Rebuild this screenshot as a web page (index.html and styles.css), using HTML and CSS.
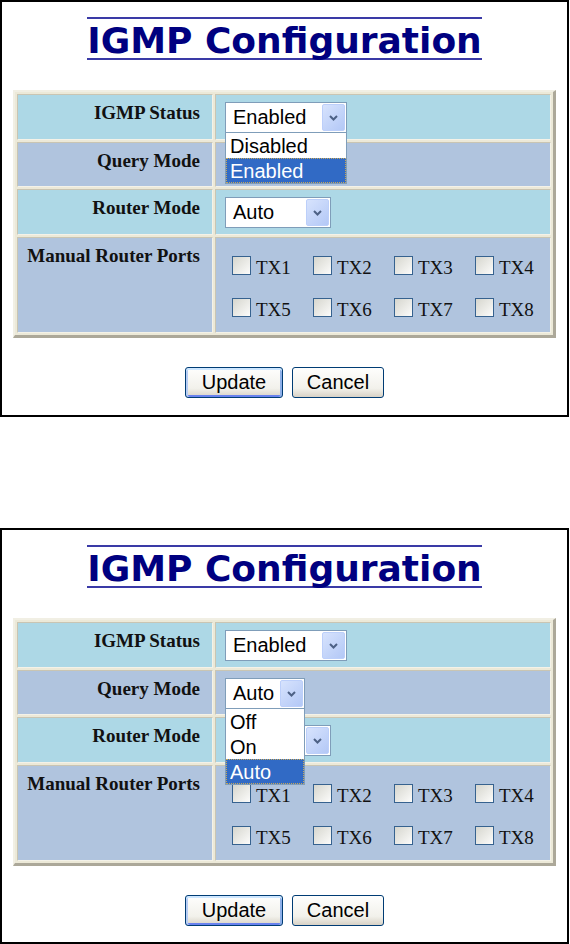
FILE: index.html
```html
<!DOCTYPE html>
<html lang="en">

<head>
    <meta charset="UTF-8">
    <meta name="viewport" content="width=device-width, initial-scale=1.0">
    <title>IGMP Configuration</title>
    <link rel="stylesheet" href="styles.css">
</head>

<body>

    <!-- Ekran 1: IGMP Status listesi acik -->
    <div class="shot">
        <h1 class="title"><span>IGMP Configuration</span></h1>

        <table class="config">
            <tr class="row-light row-short">
                <th>IGMP Status</th>
                <td>
                    <div class="select-wrap">
                        <div class="select select-status">
                            <span class="select-text">Enabled</span>
                            <span class="select-arrow"><svg width="9" height="6" viewBox="0 0 9 6"><polyline points="1,1 4.5,4.5 8,1" fill="none" stroke="#4d6185" stroke-width="2"/></svg></span>
                        </div>
                        <ul class="dropdown">
                            <li>Disabled</li>
                            <li class="active">Enabled</li>
                        </ul>
                    </div>
                </td>
            </tr>
            <tr class="row-dark row-mid">
                <th>Query Mode</th>
                <td>
                    <div class="select-wrap">
                        <div class="select select-query">
                            <span class="select-text">Auto</span>
                            <span class="select-arrow"><svg width="9" height="6" viewBox="0 0 9 6"><polyline points="1,1 4.5,4.5 8,1" fill="none" stroke="#4d6185" stroke-width="2"/></svg></span>
                        </div>
                    </div>
                </td>
            </tr>
            <tr class="row-light row-short">
                <th>Router Mode</th>
                <td>
                    <div class="select-wrap">
                        <div class="select select-router">
                            <span class="select-text">Auto</span>
                            <span class="select-arrow"><svg width="9" height="6" viewBox="0 0 9 6"><polyline points="1,1 4.5,4.5 8,1" fill="none" stroke="#4d6185" stroke-width="2"/></svg></span>
                        </div>
                    </div>
                </td>
            </tr>
            <tr class="row-dark row-tall">
                <th>Manual Router Ports</th>
                <td class="ports-cell">
                    <div class="ports">
                        <label class="port"><span class="checkbox"></span>TX1</label>
                        <label class="port"><span class="checkbox"></span>TX2</label>
                        <label class="port"><span class="checkbox"></span>TX3</label>
                        <label class="port"><span class="checkbox"></span>TX4</label>
                        <label class="port"><span class="checkbox"></span>TX5</label>
                        <label class="port"><span class="checkbox"></span>TX6</label>
                        <label class="port"><span class="checkbox"></span>TX7</label>
                        <label class="port"><span class="checkbox"></span>TX8</label>
                    </div>
                </td>
            </tr>
        </table>

        <div class="buttons">
            <button type="button" class="btn btn-update">Update</button>
            <button type="button" class="btn btn-cancel">Cancel</button>
        </div>
    </div>

    <!-- Ekran 2: Query Mode listesi acik -->
    <div class="shot shot-second">
        <h1 class="title"><span>IGMP Configuration</span></h1>

        <table class="config">
            <tr class="row-light row-short">
                <th>IGMP Status</th>
                <td>
                    <div class="select-wrap">
                        <div class="select select-status">
                            <span class="select-text">Enabled</span>
                            <span class="select-arrow"><svg width="9" height="6" viewBox="0 0 9 6"><polyline points="1,1 4.5,4.5 8,1" fill="none" stroke="#4d6185" stroke-width="2"/></svg></span>
                        </div>
                    </div>
                </td>
            </tr>
            <tr class="row-dark row-mid">
                <th>Query Mode</th>
                <td>
                    <div class="select-wrap">
                        <div class="select select-query">
                            <span class="select-text">Auto</span>
                            <span class="select-arrow"><svg width="9" height="6" viewBox="0 0 9 6"><polyline points="1,1 4.5,4.5 8,1" fill="none" stroke="#4d6185" stroke-width="2"/></svg></span>
                        </div>
                        <ul class="dropdown">
                            <li>Off</li>
                            <li>On</li>
                            <li class="active">Auto</li>
                        </ul>
                    </div>
                </td>
            </tr>
            <tr class="row-light row-short">
                <th>Router Mode</th>
                <td>
                    <div class="select-wrap">
                        <div class="select select-router">
                            <span class="select-text">Auto</span>
                            <span class="select-arrow"><svg width="9" height="6" viewBox="0 0 9 6"><polyline points="1,1 4.5,4.5 8,1" fill="none" stroke="#4d6185" stroke-width="2"/></svg></span>
                        </div>
                    </div>
                </td>
            </tr>
            <tr class="row-dark row-tall">
                <th>Manual Router Ports</th>
                <td class="ports-cell">
                    <div class="ports">
                        <label class="port"><span class="checkbox"></span>TX1</label>
                        <label class="port"><span class="checkbox"></span>TX2</label>
                        <label class="port"><span class="checkbox"></span>TX3</label>
                        <label class="port"><span class="checkbox"></span>TX4</label>
                        <label class="port"><span class="checkbox"></span>TX5</label>
                        <label class="port"><span class="checkbox"></span>TX6</label>
                        <label class="port"><span class="checkbox"></span>TX7</label>
                        <label class="port"><span class="checkbox"></span>TX8</label>
                    </div>
                </td>
            </tr>
        </table>

        <div class="buttons">
            <button type="button" class="btn btn-update">Update</button>
            <button type="button" class="btn btn-cancel">Cancel</button>
        </div>
    </div>

</body>

</html>
```

FILE: styles.css
```css
body {
    margin: 0;
    background-color: white;
    font-family: "Liberation Serif", "Times New Roman", serif;
}

.shot {
    box-sizing: border-box;
    width: 569px;
    height: 417px;
    border: 2px solid #000;
    background-color: white;
}

.shot-second {
    margin-top: 111px;
    height: 416px;
}

/* Baslik: ust ve alt cizgili */
.title {
    display: flex;
    justify-content: center;
    margin: 15px 0 0;
    font-family: "DejaVu Sans", Verdana, sans-serif;
    font-size: 36px;
    font-weight: bold;
    color: #000080;
}

.title span {
    display: block;
    padding-top: 5px;
    line-height: 34px;
    border-top: 2px solid #3a3aa6;
    border-bottom: 2px solid #3a3aa6;
}

/* Ayar tablosu */
.config {
    width: 543px;
    margin: 30px auto 0;
    border-style: solid;
    border-width: 2px 3px 3px 2px;
    border-color: #f1efe4 #aca899 #aca899 #f1efe4;
    border-spacing: 2px;
    background-color: #ece9d8;
}

.config th,
.config td {
    border: 1px solid;
    border-color: #c9c5b3 #f4f2e8 #f4f2e8 #c9c5b3;
    vertical-align: top;
}

.config th {
    box-sizing: border-box;
    width: 196px;
    padding: 7px 12px 0 0;
    text-align: right;
    font-size: 19px;
    font-weight: bold;
    line-height: 22px;
    color: #111;
}

.config td {
    padding: 7px 0 0 9px;
}

.row-light th,
.row-light td {
    background-color: #add8e6;
}

.row-dark th,
.row-dark td {
    background-color: #b0c4de;
}

.row-short {
    height: 46px;
}

.row-mid {
    height: 45px;
}

.row-tall {
    height: 96px;
}

/* Acilir kutu */
.select-wrap {
    position: relative;
    display: inline-block;
}

.select {
    box-sizing: border-box;
    display: flex;
    align-items: center;
    justify-content: space-between;
    height: 31px;
    padding: 0 1px 0 7px;
    border: 1px solid #7f9db9;
    background-color: white;
    font-family: "Liberation Sans", Arial, sans-serif;
    font-size: 20px;
    color: #000;
}

.select-status {
    width: 122px;
}

.select-query {
    width: 80px;
}

.select-router {
    width: 106px;
}

.select-arrow {
    box-sizing: border-box;
    display: flex;
    align-items: center;
    justify-content: center;
    width: 23px;
    height: 27px;
    border: 1px solid #bccffa;
    border-radius: 2px;
    background: linear-gradient(135deg, #d7e3fd, #b3c8f6);
}

.dropdown {
    position: absolute;
    top: 100%;
    left: 0;
    z-index: 2;
    box-sizing: border-box;
    width: 100%;
    margin: 0;
    padding: 0;
    list-style: none;
    border: 1px solid #7f9db9;
    border-top: none;
    background-color: white;
    font-family: "Liberation Sans", Arial, sans-serif;
    font-size: 20px;
    color: #000;
}

.dropdown li {
    box-sizing: border-box;
    height: 25px;
    padding-left: 3px;
    line-height: 24px;
    border: 1px solid transparent;
}

.dropdown li.active {
    background-color: #316ac5;
    color: white;
    border: 1px dotted #c8a85a;
}

/* Port kutulari */
.config .ports-cell {
    padding-top: 18px;
}

.ports {
    display: grid;
    grid-template-columns: 81px 81px 81px auto;
    row-gap: 23px;
    padding-left: 7px;
}

.port {
    display: flex;
    align-items: flex-end;
    gap: 5px;
    font-size: 19px;
    line-height: 14px;
    color: #111;
}

.checkbox {
    box-sizing: border-box;
    width: 19px;
    height: 19px;
    border: 1px solid #36628f;
    background: linear-gradient(135deg, #d6d6ce, #fcfcfb);
}

/* Butonlar */
.buttons {
    display: flex;
    justify-content: center;
    gap: 9px;
    margin-top: 29px;
}

.btn {
    box-sizing: border-box;
    height: 31px;
    padding: 0;
    border: 1px solid #003c74;
    border-radius: 3px;
    background: linear-gradient(#fefefd, #f2f1eb 70%, #d8d2c6);
    font-family: "Liberation Sans", Arial, sans-serif;
    font-size: 20px;
    color: #000;
}

.btn-update {
    width: 98px;
    box-shadow: inset 0 2px 0 #cee7ff, inset 2px 0 0 #b7cdf4, inset -2px 0 0 #8eb0e9, inset 0 -2px 0 #6982ee;
}

.btn-cancel {
    width: 92px;
}
```
